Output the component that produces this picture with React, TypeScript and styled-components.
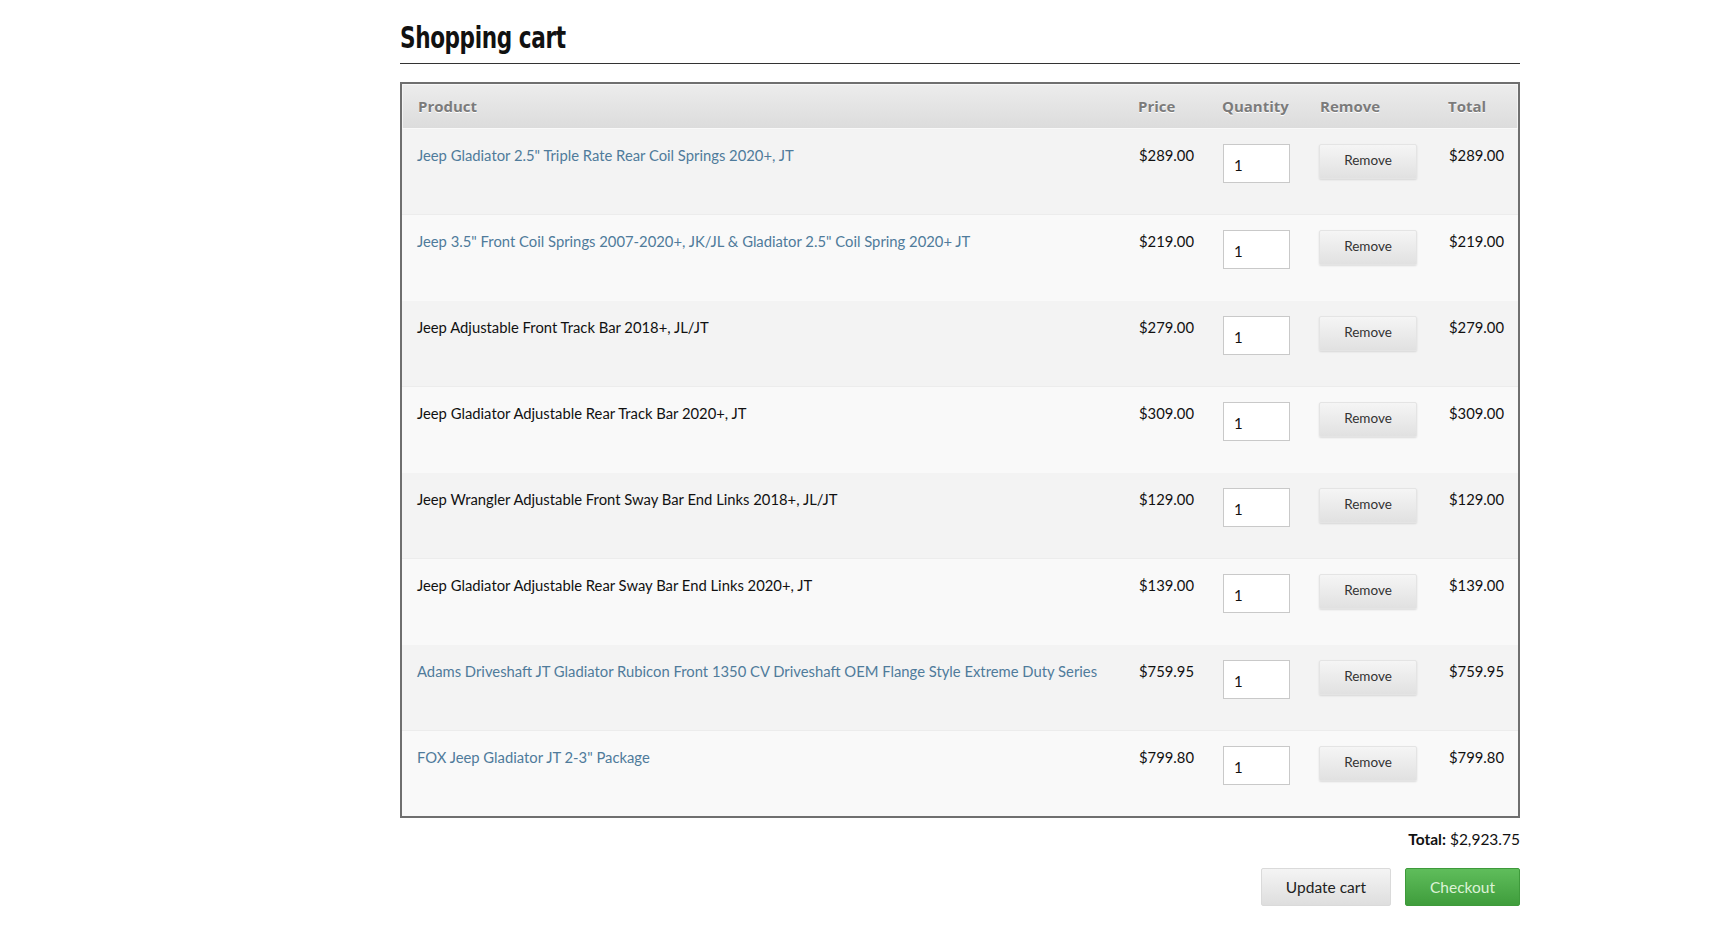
import React from "react";
import styled, { createGlobalStyle } from "styled-components";

const Global = createGlobalStyle`
  html, body { margin: 0; padding: 0; background: #fff; }
  body { font-family: Lato, "Open Sans", sans-serif; color: #111; }
`;

const Page = styled.div`
  width: 1120px;
  margin-left: 400px;
  padding-top: 19px;
`;

const Heading = styled.h1`
  margin: 0;
  font-family: "DejaVu Sans Condensed", "Liberation Sans", sans-serif;
  font-weight: 700;
  font-size: 30px;
  line-height: 38px;
  letter-spacing: -0.5px;
  color: #111;
  padding-bottom: 6px;
  border-bottom: 1px solid #333;
`;

const HeadingText = styled.span`
  display: inline-block;
  transform: scaleX(0.8);
  transform-origin: left center;
`;

const Table = styled.div`
  margin-top: 18px;
  border: 2px solid #6f6f6f;
  background: #f6f6f6;
`;

const cols = "1fr 84px 98px 128px 69px";

const HeadRow = styled.div`
  display: grid;
  grid-template-columns: ${cols};
  align-items: center;
  height: 44px;
  box-sizing: border-box;
  padding-left: 15px;
  padding-bottom: 1px;
  background: linear-gradient(#ececec, #dcdcdc);
  border-top: 1px solid #f7f7f7;
  border-left: 1px solid #f3f3f3;
  border-right: 1px solid #f3f3f3;
`;

const HeadCell = styled.div`
  font-family: "Open Sans", Lato, sans-serif;
  font-weight: 700;
  font-size: 15px;
  color: #7b7b7b;
  text-shadow: 0 1px 0 #fff;
`;

const Row = styled.div<{ $alt: boolean }>`
  display: grid;
  grid-template-columns: ${cols};
  align-items: start;
  height: 86px;
  box-sizing: border-box;
  padding: 16px 0 0 15px;
  background: ${(p) => (p.$alt ? "#f9f9f9" : "#f3f3f3")};
  border-top: 1px solid ${(p) => (p.$alt ? "#ececec" : "#f9f9f9")};
`;

const Cell = styled.div`
  font-size: 14.8px;
  line-height: 20px;
  color: #111;
`;

const ProductLink = styled.a`
  font-size: 14.8px;
  line-height: 20px;
  color: #4f7b9b;
  text-decoration: none;
`;

const QtyInput = styled.input`
  box-sizing: border-box;
  width: 67px;
  height: 39px;
  margin-top: -1px;
  border: 1px solid #c9c9c9;
  background: #fff;
  padding: 3px 0 0 10px;
  font-family: Lato, sans-serif;
  font-size: 15px;
  color: #111;
  outline: none;
`;

const RemoveButton = styled.button`
  width: 98px;
  height: 35px;
  margin-top: -1px;
  margin-left: -2px;
  border: 1px solid #e4e4e4;
  border-radius: 2px;
  background: linear-gradient(#f5f5f5, #e1e1e1);
  box-shadow: 0 1px 2px rgba(0, 0, 0, 0.12);
  font-family: Lato, sans-serif;
  font-size: 13.5px;
  color: #333;
  padding: 0 0 4px 0;
  cursor: pointer;
`;

const Summary = styled.div`
  display: flex;
  flex-direction: column;
  align-items: flex-end;
  padding-top: 10px;
`;

const TotalLine = styled.div`
  font-size: 15.5px;
  line-height: 22px;
  color: #111;
  & b { font-weight: 700; }
`;

const Actions = styled.div`
  display: flex;
  gap: 14px;
  margin-top: 18px;
`;

const Action = styled.button<{ $primary?: boolean }>`
  height: 38px;
  padding: 0 24px;
  border-radius: 2px;
  font-family: Lato, sans-serif;
  font-size: 15.5px;
  cursor: pointer;
  border: 1px solid ${(p) => (p.$primary ? "#3e9a3b" : "#dadada")};
  background: ${(p) =>
    p.$primary
      ? "linear-gradient(#5fbd5b, #3f9d3c)"
      : "linear-gradient(#f4f4f4, #dedede)"};
  color: ${(p) => (p.$primary ? "#dcf3d6" : "#222")};
  min-width: ${(p) => (p.$primary ? "114px" : "128px")};
`;

type Item = { name: string; price: string; link: boolean };

const items: Item[] = [
  { name: 'Jeep Gladiator 2.5" Triple Rate Rear Coil Springs 2020+, JT', price: "$289.00", link: true },
  { name: 'Jeep 3.5" Front Coil Springs 2007-2020+, JK/JL & Gladiator 2.5" Coil Spring 2020+ JT', price: "$219.00", link: true },
  { name: "Jeep Adjustable Front Track Bar 2018+, JL/JT", price: "$279.00", link: false },
  { name: "Jeep Gladiator Adjustable Rear Track Bar 2020+, JT", price: "$309.00", link: false },
  { name: "Jeep Wrangler Adjustable Front Sway Bar End Links 2018+, JL/JT", price: "$129.00", link: false },
  { name: "Jeep Gladiator Adjustable Rear Sway Bar End Links 2020+, JT", price: "$139.00", link: false },
  { name: "Adams Driveshaft JT Gladiator Rubicon Front 1350 CV Driveshaft OEM Flange Style Extreme Duty Series", price: "$759.95", link: true },
  { name: 'FOX Jeep Gladiator JT 2-3" Package', price: "$799.80", link: true },
];

export default function App() {
  return (
    <>
      <Global />
      <Page>
        <Heading>
          <HeadingText>Shopping cart</HeadingText>
        </Heading>
        <Table>
          <HeadRow>
            <HeadCell>Product</HeadCell>
            <HeadCell>Price</HeadCell>
            <HeadCell>Quantity</HeadCell>
            <HeadCell>Remove</HeadCell>
            <HeadCell>Total</HeadCell>
          </HeadRow>
          {items.map((it, i) => (
            <Row key={i} $alt={i % 2 === 1}>
              <Cell>
                {it.link ? <ProductLink href="#">{it.name}</ProductLink> : it.name}
              </Cell>
              <Cell>{it.price}</Cell>
              <Cell>
                <QtyInput defaultValue="1" />
              </Cell>
              <Cell>
                <RemoveButton>Remove</RemoveButton>
              </Cell>
              <Cell>{it.price}</Cell>
            </Row>
          ))}
        </Table>
        <Summary>
          <TotalLine>
            <b>Total:</b> $2,923.75
          </TotalLine>
          <Actions>
            <Action>Update cart</Action>
            <Action $primary>Checkout</Action>
          </Actions>
        </Summary>
      </Page>
    </>
  );
}
